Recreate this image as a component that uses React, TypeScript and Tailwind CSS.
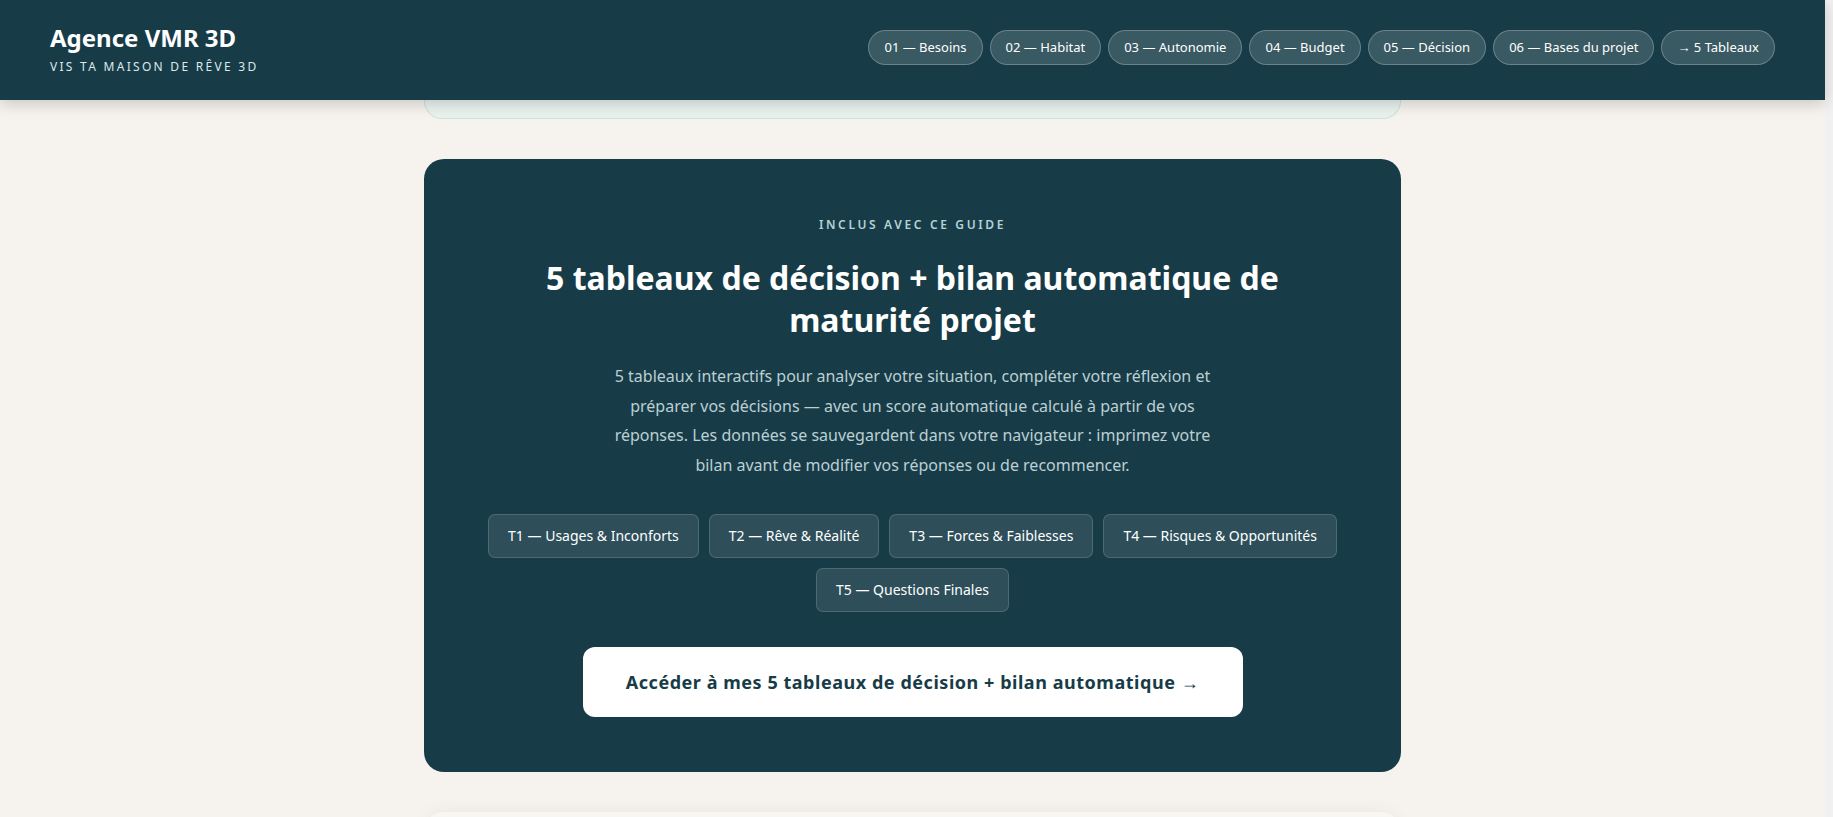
import React from 'react';

const navItems = [
  '01 — Besoins',
  '02 — Habitat',
  '03 — Autonomie',
  '04 — Budget',
  '05 — Décision',
  '06 — Bases du projet',
  '→ 5 Tableaux',
];

const tableaux = [
  'T1 — Usages & Inconforts',
  'T2 — Rêve & Réalité',
  'T3 — Forces & Faiblesses',
  'T4 — Risques & Opportunités',
  'T5 — Questions Finales',
];

export default function App() {
  return (
    <div className="flex h-screen overflow-hidden bg-[#f6f3ee] font-['Segoe_UI','Noto_Sans',sans-serif]">
      <div className="min-w-0 flex-1">
        <header className="relative z-10 flex h-[100px] items-center justify-between bg-[#173c48] px-[50px] shadow-[0_4px_14px_rgba(0,0,0,0.18)]">
          <div className="-mt-[3px]">
            <h1 className="text-[24px] font-bold leading-[30px] text-white">Agence VMR 3D</h1>
            <p className="mt-[6px] text-[12px] uppercase leading-4 tracking-[0.19em] text-[#dce8ea]">Vis ta maison de rêve 3D</p>
          </div>
          <nav className="-mt-[5px] flex gap-[7px]">
            {navItems.map((item) => (
              <a
                key={item}
                href="#"
                className="rounded-full border border-white/25 bg-white/15 px-[15px] py-[7px] text-[13px] leading-[19px] text-white"
              >
                {item}
              </a>
            ))}
          </nav>
        </header>

        <main className="mx-auto w-[977px] space-y-10">
          <div className="h-[19px] rounded-b-[18px] border-x border-b border-[#cfe2da] bg-[#e9f3ee]" />

          <section className="rounded-[20px] bg-[#173c48] px-12 pb-[55px] pt-[58px] text-center">
            <p className="text-[12px] font-semibold uppercase leading-4 tracking-[0.22em] text-[#b4d3d6]">Inclus avec ce guide</p>
            <h2 className="mx-auto mt-[24px] max-w-[760px] text-[32px] font-bold leading-[42px] text-white">
              5 tableaux de décision + bilan automatique de maturité projet
            </h2>
            <p className="mx-auto mt-[21px] max-w-[620px] text-[16px] leading-[29.6px] text-[#bccfd3]">
              5 tableaux interactifs pour analyser votre situation, compléter votre réflexion et préparer vos décisions — avec un score automatique calculé à partir de vos réponses. Les données se sauvegardent dans votre navigateur : imprimez votre bilan avant de modifier vos réponses ou de recommencer.
            </p>
            <div className="mx-auto mt-[34px] flex max-w-[900px] flex-wrap justify-center gap-[10px]">
              {tableaux.map((t) => (
                <span
                  key={t}
                  className="rounded-[7px] border border-white/15 bg-white/10 px-[19px] py-[11px] text-[14px] leading-[20px] text-white"
                >
                  {t}
                </span>
              ))}
            </div>
            <a
              href="#"
              className="mx-auto mt-[35px] flex h-[70px] w-[660px] items-center justify-center rounded-[12px] bg-white text-[18px] font-bold tracking-[0.03em] text-[#173c48]"
            >
              Accéder à mes 5 tableaux de décision + bilan automatique →
            </a>
          </section>

          <div className="h-40 rounded-[20px] bg-[#f8f6f2] shadow-[0_0_18px_rgba(0,0,0,0.05)]" />
        </main>
      </div>
      <div className="w-2 bg-[#f1f1f1]" />
    </div>
  );
}
